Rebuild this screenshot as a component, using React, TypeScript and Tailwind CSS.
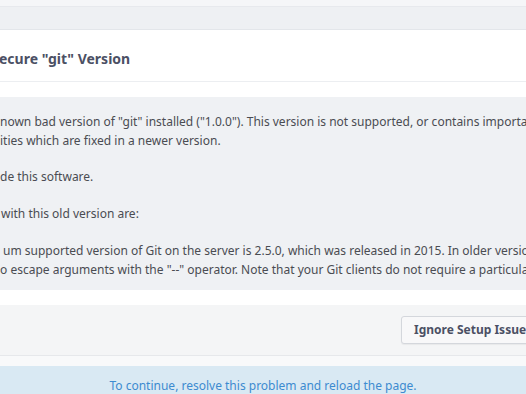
import React from 'react';

const Line: React.FC<{ text: string; indent?: string }> = ({ text, indent = 'pl-0' }) => (
  <div className={`whitespace-nowrap h-[19px] leading-[19px] ${indent}`}>{text}</div>
);

const App: React.FC = () => {
  return (
    <div className="w-[526px] h-[394px] overflow-hidden bg-white flex flex-col font-['Noto_Sans',sans-serif]">
      {/* top chrome */}
      <div className="shrink-0 h-[7px] bg-[#f5f6f8] border-b border-[#e7e9ed]" />
      <div className="shrink-0 h-[23px] bg-[#eef0f3] border-b border-[#e3e6ea]" />

      {/* issue header */}
      <div className="shrink-0 h-[52px] pt-[5px] flex items-center border-b border-[#eceef1]">
        <h1 className="whitespace-nowrap text-[14px] font-bold text-[#4b5064] -ml-[1px]">ecure "git" Version</h1>
      </div>
      <div className="shrink-0 h-[15px]" />

      {/* message body */}
      <div className="shrink-0 h-[193px] bg-[#eff1f4] pt-[15px] text-[12px] text-[#4a4c52] overflow-hidden">
        <Line text={'nown bad version of "git" installed ("1.0.0"). This version is not supported, or contains important security'} />
        <Line text="ities which are fixed in a newer version." />
        <div className="h-[17px]" />
        <Line text="de this software." />
        <div className="h-[18px]" />
        <Line text="with this old version are:" indent="pl-[1px]" />
        <div className="h-[18px]" />
        <Line text="um supported version of Git on the server is 2.5.0, which was released in 2015. In older versions, Git does" indent="pl-[3px]" />
        <Line text={'o escape arguments with the "--" operator. Note that your Git clients do not require a particular version.'} />
      </div>
      <div className="shrink-0 h-[15px]" />

      {/* actions */}
      <div className="shrink-0 h-[51px] bg-[#f4f5f6] border-b border-[#e6e8eb] flex items-center pl-[401px]">
        <button className="h-[28px] px-[12px] whitespace-nowrap rounded-[3px] border border-[#d4d7dc] bg-[#f8f8f9] text-[12px] font-bold text-[#4b5064] shadow-[0_1px_1px_rgba(0,0,0,0.05)]">
          Ignore Setup Issue
        </button>
      </div>
      <div className="shrink-0 h-[10px] bg-[#f8f9fa]" />

      {/* footer notice */}
      <div className="flex-1 min-h-0 overflow-hidden bg-[#d9e9f3] flex justify-center pt-[11px]">
        <p className="text-[12px] text-[#3d8bd0] whitespace-nowrap leading-[18px]">
          To continue, resolve this problem and reload the page.
        </p>
      </div>
    </div>
  );
};

export default App;
